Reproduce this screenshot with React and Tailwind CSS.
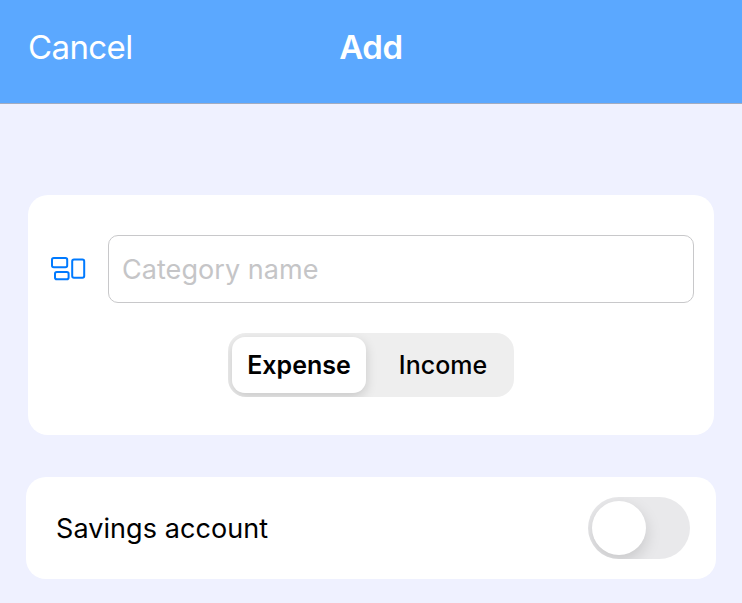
import { useState } from "react";

function CategoryIcon() {
  return (
    <svg className="h-6 w-9 shrink-0" viewBox="0 0 36 24" fill="none" stroke="#007aff" strokeWidth="2">
      <rect x="2" y="1" width="15.2" height="9.3" rx="1.8" />
      <rect x="5" y="15" width="13.6" height="7.2" rx="1.8" />
      <rect x="22.2" y="2.6" width="12" height="18.2" rx="1.8" />
    </svg>
  );
}

export default function App() {
  const [name, setName] = useState("");
  return (
    <div className="flex h-[603px] w-[742px] flex-col overflow-hidden bg-[#eff1ff] font-['Inter','Liberation_Sans',sans-serif] text-black">
      <header className="grid h-[104px] shrink-0 grid-cols-3 items-start border-b border-[#a3acc0] bg-[#5ba8ff] pt-[27px] text-[33px] leading-10 text-white">
        <button className="pl-7 text-left font-normal tracking-[-0.6px]">Cancel</button>
        <h1 className="text-center font-semibold tracking-[-0.4px]">Add</h1>
      </header>

      <section className="mx-7 mt-[91px] flex h-60 shrink-0 flex-col items-center rounded-[20px] bg-white px-5 pt-10">
        <div className="flex w-full items-center">
          <div className="flex w-[60px] shrink-0 items-center pl-0.5">
            <CategoryIcon />
          </div>
          <input
            className="h-[68px] w-[586px] rounded-[10px] border border-[#c8c8ca] bg-white pl-[13px] text-[27px] tracking-[0.05px] text-black outline-none placeholder:text-[#c5c5c7]"
            placeholder="Category name"
            value={name}
            onChange={(e) => setName(e.target.value)}
          />
        </div>
        <div className="mt-[30px] flex h-16 w-[286px] overflow-hidden rounded-[18px] bg-[#eeeeee] p-1 text-[25px]">
          <button className="h-14 w-[134px] rounded-[13px] bg-white pt-0.5 font-semibold shadow-[0_4px_12px_rgba(0,0,0,0.16)]">
            Expense
          </button>
          <button className="ml-2.5 h-14 flex-1 pt-0.5 font-medium">Income</button>
        </div>
      </section>

      <section className="mx-[26px] mt-[42px] flex h-[102px] shrink-0 items-center justify-between rounded-[20px] bg-white pr-[26px] pl-[30px]">
        <span className="pt-0.5 text-[27px] tracking-[0.07px]">Savings account</span>
        <button role="switch" aria-checked="false" aria-label="Savings account" className="h-[62px] w-[102px] overflow-hidden rounded-full bg-[#e9e9eb] p-1">
          <span className="block size-[54px] rounded-full bg-white shadow-[0_6px_16px_rgba(0,0,0,0.15)]" />
        </button>
      </section>
    </div>
  );
}
